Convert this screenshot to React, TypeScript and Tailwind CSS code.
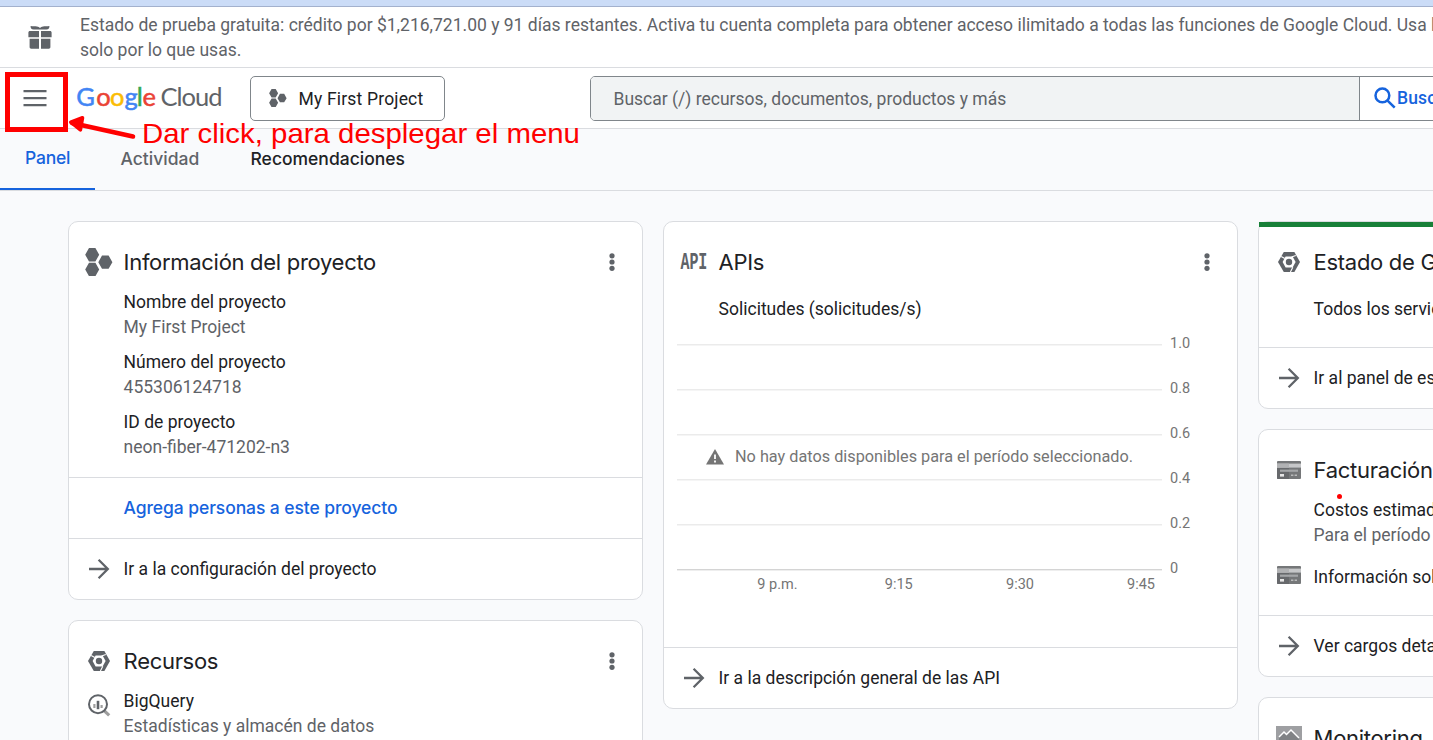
import React, { type ReactNode } from "react";

const GRAY = "#5f6368";

function HexCluster({ className }: { className: string }) {
  return (
    <svg viewBox="0 0 28 28" className={className} fill={GRAY}>
      <path d="M4 0h6.4l3.8 6.8-3.8 6.6H4L.2 6.8zM4 14.8h6.4l3.8 6.6-3.8 6.8H4L.2 21.4zM17 7.4h6.6l3.8 6.8-3.8 6.6H17l-3.7-6.6z" />
    </svg>
  );
}

function CloudHex() {
  return (
    <svg width="22" height="20" viewBox="0 0 22 20">
      <path d="M5.8 0h10.6L22 10l-5.6 10H5.8L0 10z" fill={GRAY} />
      <path d="M7.6 4.6h7L17.6 10l-3 5.4h-7L4.6 10z" fill="#fff" />
      <path d="M3.2 4.4l3.6 2M13.6 4.9l4.2-1.4M14.8 15.2L12.4 20" stroke="#fff" strokeWidth="1.1" />
      <circle cx="11" cy="10" r="3.2" fill={GRAY} />
    </svg>
  );
}

function BigQueryIcon() {
  return (
    <svg width="24" height="24" viewBox="0 0 24 24" fill="none">
      <path d="M16.8 17.3l5.4 5.1" stroke="#9e9e9e" strokeWidth="3.2" />
      <circle cx="11" cy="11.2" r="9" stroke={GRAY} strokeWidth="2" />
      <path d="M7.4 11v4" stroke="#9e9e9e" strokeWidth="2.2" />
      <path d="M11 7.8v8.4" stroke={GRAY} strokeWidth="2.6" />
      <path d="M14.6 12v3" stroke="#9e9e9e" strokeWidth="2.2" />
    </svg>
  );
}

function CreditCardIcon() {
  return (
    <svg width="24" height="18" viewBox="0 0 24 18">
      <rect width="24" height="18" rx="1" fill="#757779" />
      <path d="M0 7h12v11H1a1 1 0 0 1-1-1z" fill="#67696c" />
      <rect y="2.6" width="24" height="4" fill="#c6c7c9" />
      <rect y="2.6" width="12" height="4" fill="#b1b2b4" />
      <rect x="3" y="8.6" width="18" height="2.2" fill="#a4a6a8" />
      <rect x="3" y="13" width="4" height="2.6" fill="#e6e6e6" />
      <path d="M14 14.3h2.4M17.6 14.3H20" stroke="#b9babb" strokeWidth="1.4" />
    </svg>
  );
}

function MonitoringIcon() {
  return (
    <svg width="26" height="24" viewBox="0 0 26 24">
      <path d="M0 0h26v18H0z" fill="#9e9fa2" />
      <path d="M3 11l5-5 2.5 2.5L15 4l8 8v6H3z" fill="#808285" />
      <path d="M3 11l5-5 2.5 2.5L15 4l8 8" stroke="#fff" strokeWidth="1.5" fill="none" />
      <path d="M8 18h10v5H8z" fill={GRAY} />
    </svg>
  );
}

function Arrow() {
  return (
    <svg width="22" height="22" viewBox="0 0 22 22" fill="none" stroke={GRAY} strokeWidth="2.3">
      <path d="M1 11h18.6M10.6 1.8L19.8 11l-9.2 9.2" />
    </svg>
  );
}

function ApiIcon() {
  return (
    <span className="mt-[3px] inline-block scale-y-[1.6] font-['Liberation_Mono',monospace] text-[15px] leading-[15px] font-bold tracking-[-0.2px] text-[#5f6368]">
      API
    </span>
  );
}

function MoreButton() {
  return (
    <button aria-label="Más" className="mr-[27px] ml-auto">
      <svg width="6" height="20" viewBox="0 0 6 20" fill={GRAY} className="block">
        <circle cx="3" cy="3.8" r="2.6" />
        <circle cx="3" cy="10" r="2.6" />
        <circle cx="3" cy="16.3" r="2.6" />
      </svg>
    </button>
  );
}

function IconCell({ children }: { children?: ReactNode }) {
  return <div className="flex w-[54.6px] shrink-0 items-center justify-center pl-[5px]">{children}</div>;
}

function Card({ children }: { children: ReactNode }) {
  return (
    <section className="relative flex flex-col rounded-[10px] border border-[#dadce0] bg-white">{children}</section>
  );
}

function CardTitle({ icon, title, menu }: { icon: ReactNode; title: string; menu?: boolean }) {
  return (
    <div className="mt-[25px] mb-[13px] flex h-[30px] items-center">
      <IconCell>{icon}</IconCell>
      <h2 className="font-[Inter,sans-serif] text-[22px] leading-[30px] tracking-[-0.3px] whitespace-nowrap text-[#202124]">
        {title}
      </h2>
      {menu && <MoreButton />}
    </div>
  );
}

function Field({ label, value }: { label: string; value: string }) {
  return (
    <div>
      <p>{label}</p>
      <p className="text-[#5f6368]">{value}</p>
    </div>
  );
}

function CardLink({ text }: { text: string }) {
  return (
    <div className="flex h-[61px] items-center border-t border-[#dadce0] whitespace-nowrap">
      <IconCell>
        <Arrow />
      </IconCell>
      <a>{text}</a>
    </div>
  );
}

const yTicks = ["1.0", "0.8", "0.6", "0.4", "0.2", "0"];
const xTicks: [string, number][] = [
  ["9 p.m.", 113.5],
  ["9:15", 234.8],
  ["9:30", 356],
  ["9:45", 477],
];

function RequestsChart() {
  return (
    <svg width="573" height="324" viewBox="0 1 573 324" className="block font-[Roboto,sans-serif]">
      {yTicks.map((label, i) => (
        <g key={label}>
          <rect x="13" y={22 + i * 45} width="485" height={i === 5 ? 1.4 : 1.5} fill={i === 5 ? "#d4d4d4" : "#ebebeb"} />
          <text x="506" y={26.3 + i * 45} fontSize="14.5" fill="#757575">
            {label}
          </text>
        </g>
      ))}
      {xTicks.map(([label, x]) => (
        <text key={label} x={x} y="267" fontSize="14.5" fill="#757575" textAnchor="middle">
          {label}
        </text>
      ))}
      <path d="M51 127l9 15.6H42z" fill="#757575" />
      <path d="M51 132.4v4.6M51 138.4v2" stroke="#fff" strokeWidth="1.8" />
      <text x="71" y="140" fontSize="16.25" fill="#757575">
        No hay datos disponibles para el período seleccionado.
      </text>
    </svg>
  );
}

function Logo() {
  return (
    <svg width="150" height="36" viewBox="0 0 150 36" className="font-[Lato,sans-serif]" fontSize="25.5">
      <text y="26">
        <tspan x="0.2" fill="#4285f4" stroke="#4285f4" strokeWidth=".5">G</tspan>
        <tspan x="20.2" fill="#ea4335" stroke="#ea4335" strokeWidth=".5">o</tspan>
        <tspan x="34" fill="#fbbc04" stroke="#fbbc04" strokeWidth=".5">o</tspan>
        <tspan x="48.6" fill="#4285f4" stroke="#4285f4" strokeWidth=".5">g</tspan>
        <tspan x="60.8" fill="#34a853" stroke="#34a853" strokeWidth=".5">l</tspan>
        <tspan x="66.4" fill="#ea4335" stroke="#ea4335" strokeWidth=".5">e</tspan>
      </text>
      <text x="84.5" y="26" fill="#5f6368" textLength="62">
        Cloud
      </text>
    </svg>
  );
}

export default function App() {
  return (
    <div className="relative flex h-[740px] w-full flex-col overflow-hidden bg-[#f9fafc] font-[Roboto,sans-serif] text-[17.5px] leading-[25px] text-[#202124]">
      <div className="h-[7px] shrink-0 border-b border-[#a3b1cd] bg-[#cbdcf7]" />

      <div className="flex h-[61px] shrink-0 items-center border-b border-[#dadce0] bg-white">
        <div className="flex w-20 shrink-0 justify-center">
          <svg width="24" height="23" viewBox="0 0 24 23" fill={GRAY}>
            <path d="M2.6 0C5 .4 7 .2 9 .4c1.4 0 2.2.9 3 1.7C12.800 1.300 13.600.600 15 .400c2-.200 4 0 6.400-.400.300 1.900-.800 3.400-3 3.600H5.600C3.400 3.400 2.300 1.900 2.600 0z" />
            <path d="M2 5h9v6.200H.4V6.600C.4 5.700 1 5 2 5zM13 5h9c1 0 1.600.7 1.600 1.600v4.600H13zM1.600 12.700H11v10H3.200c-1 0-1.600-.7-1.600-1.600zM13 12.700h9.400v8.400c0 .9-.6 1.600-1.600 1.600H13z" />
          </svg>
        </div>
        <p className="pt-[2px] whitespace-nowrap text-[#5f6368]">
          Estado de prueba gratuita: crédito por $1,216,721.00 y 91 días restantes. Activa tu cuenta completa para
          obtener acceso ilimitado a todas las funciones de Google Cloud. Usa los
          <br />
          solo por lo que usas.
        </p>
      </div>

      <header className="flex h-[61px] shrink-0 items-center border-b border-[#dadce0] bg-white">
        <button aria-label="Menú" className="flex w-[70px] shrink-0 justify-center">
          <svg width="24" height="18" viewBox="0 0 24 18" fill={GRAY}>
            <path d="M.5 1h23v2.300H.5zM.5 8h23v2.300H.5zM.5 15h23v2.300H.5z" />
          </svg>
        </button>
        <div className="ml-[6px] w-[174px] shrink-0">
          <Logo />
        </div>
        <button className="flex h-[45px] w-[195px] shrink-0 items-center rounded-[5px] border border-[#80868b] pl-[17.5px] tracking-[0.18px]">
          <HexCluster className="mr-[12px] size-[18px]" />
          <span className="pt-[2px]">My First Project</span>
        </button>
        <div className="ml-[145px] flex h-[45px] w-[920px] shrink-0 overflow-hidden rounded-[5px] border border-[#80868b]">
          <div className="flex w-[769px] shrink-0 items-center border-r border-[#80868b] bg-[#f1f3f4] pt-[2px] pl-[22.5px] text-[#5f6368]">
            Buscar (/) recursos, documentos, productos y más
          </div>
          <div className="flex items-center pl-[14px] font-medium text-[#1663dd]">
            <svg width="22" height="22" viewBox="0 0 22 22" fill="none" stroke="#1663dd" strokeWidth="2.5" className="mr-px">
              <circle cx="8.4" cy="8.4" r="6.9" />
              <path d="M13.3 13.3l7.4 7.4" />
            </svg>
            <span className="tracking-[0.15px]">Buscar</span>
          </div>
        </div>
      </header>

      <nav className="flex h-[62px] shrink-0 border-b border-[#dadce0] font-[Inter,sans-serif] font-medium">
        <a className="flex w-[95px] items-center border-b-2 border-[#1663dd] pb-[2px] pl-[25px] tracking-[-0.2px] text-[#1663dd]">
          Panel
        </a>
        <a className="ml-[25.5px] flex w-[130px] items-center pb-[2px] text-[#5f6368]">Actividad</a>
        <a className="flex items-center pb-[2px]">Recomendaciones</a>
      </nav>

      <main className="grid grid-cols-[575px_575px_575px] items-start gap-5 pt-[30px] pl-[68px]">
        <div className="flex flex-col gap-5">
          <Card>
            <CardTitle icon={<HexCluster className="size-7" />} title="Información del proyecto" menu />
            <div className="mb-[17px] flex flex-col gap-[10px] pl-[54.6px]">
              <Field label="Nombre del proyecto" value="My First Project" />
              <Field label="Número del proyecto" value="455306124718" />
              <Field label="ID de proyecto" value="neon-fiber-471202-n3" />
            </div>
            <div className="flex h-[61px] items-center border-t border-[#dadce0] pb-[2px] pl-[54.6px] font-[Inter,sans-serif] font-medium tracking-[-0.09px] text-[#1663dd]">
              Agrega personas a este proyecto
            </div>
            <CardLink text="Ir a la configuración del proyecto" />
          </Card>
          <Card>
            <CardTitle icon={<CloudHex />} title="Recursos" menu />
            <div className="flex h-[120px] items-start">
              <IconCell>
                <div className="mt-1">
                  <BigQueryIcon />
                </div>
              </IconCell>
              <Field label="BigQuery" value="Estadísticas y almacén de datos" />
            </div>
          </Card>
        </div>

        <Card>
          <CardTitle icon={<ApiIcon />} title="APIs" menu />
          <p className="mt-[7px] mb-[1px] pl-[54.6px]">Solicitudes (solicitudes/s)</p>
          <RequestsChart />
          <CardLink text="Ir a la descripción general de las API" />
        </Card>

        <div className="flex flex-col gap-5">
          <Card>
            <div className="absolute inset-x-0 top-0 h-[5px] bg-[#188038]" />
            <CardTitle icon={<CloudHex />} title="Estado de Google Cloud Platform" menu />
            <p className="mt-[7px] mb-[25px] pl-[54.6px]">Todos los servicios están en estado normal</p>
            <CardLink text="Ir al panel de estado de Cloud" />
          </Card>
          <Card>
            <CardTitle icon={<CreditCardIcon />} title="Facturación" menu />
            <div className="pl-[54.6px]">
              <Field label="Costos estimados" value="Para el período de facturación" />
            </div>
            <div className="mt-[17px] mb-[25px] flex items-center">
              <IconCell>
                <div className="-mt-[5px]">
                  <CreditCardIcon />
                </div>
              </IconCell>
              Información sobre la facturación
            </div>
            <CardLink text="Ver cargos detallados" />
          </Card>
          <Card>
            <CardTitle icon={<MonitoringIcon />} title="Monitoring" menu />
            <div className="h-20" />
          </Card>
        </div>
      </main>

      <div className="absolute top-[72px] left-[5px] h-[60px] w-[63px] border-5 border-[#ff0000]" />
      <svg width="72" height="26" viewBox="0 0 72 26" className="absolute top-[114px] left-[66px]" fill="none" stroke="#ff0000" strokeLinecap="round" strokeLinejoin="round">
        <path d="M67 22.5L6 9" strokeWidth="4.6" />
        <path d="M16.5 3.8L4.8 8.2l9.6 7.6z" strokeWidth="3.6" fill="#ff0000" />
      </svg>
      <p className="absolute top-[118px] left-[141.5px] origin-left scale-x-[1.05] font-['Liberation_Sans',sans-serif] text-[28px] leading-[32px] whitespace-nowrap text-[#ff0000]">
        Dar click, para desplegar el menu
      </p>
      <div className="absolute top-[494px] left-[1337px] size-[5px] rounded-full bg-[#ff0000]" />
    </div>
  );
}
